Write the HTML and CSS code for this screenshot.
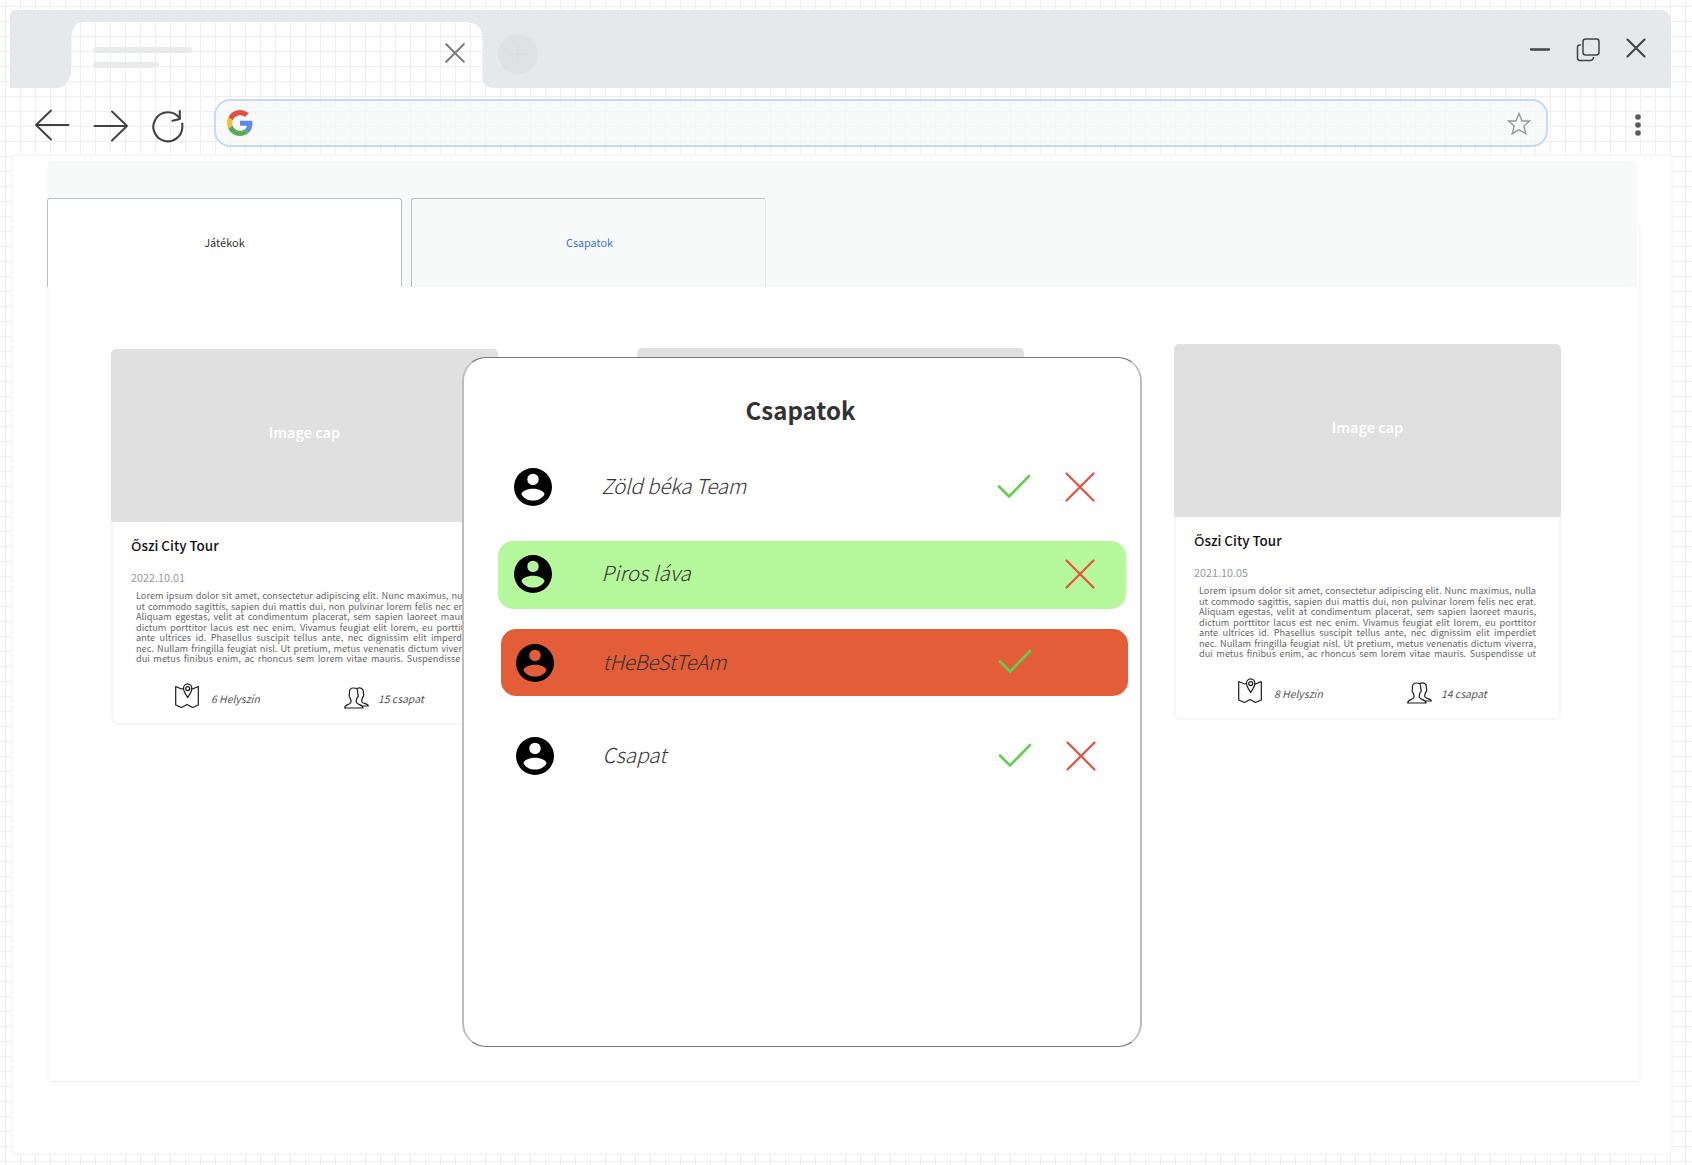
FILE: index.html
```html
<!DOCTYPE html>
<html lang="hu">
<head>
<meta charset="utf-8">
<title>Csapatok</title>
<link rel="stylesheet" href="styles.css">
</head>
<body>
<svg class="defs" width="0" height="0" aria-hidden="true">
  <symbol id="user" viewBox="0 0 38 38"><path fill-rule="evenodd" d="M19 0a19 19 0 1 0 0 38a19 19 0 0 0 0-38zM19 5.700a5.700 5.700 0 1 1 0 11.400a5.700 5.700 0 0 1 0-11.400zM19 20.700c6 0 11.500 2.600 11.500 5.700c-2 3.700-6.500 6.200-11.500 6.200s-9.500-2.500-11.500-6.200c0-3.100 5.500-5.700 11.500-5.700z"/></symbol>
  <symbol id="check" viewBox="0 0 34 24"><path d="M2 12.500L12 22.500L32 2" fill="none" stroke="#62d04e" stroke-width="2.600" stroke-linecap="round"/></symbol>
  <symbol id="cross" viewBox="0 0 30 30"><path d="M1.500 1.500L28.500 28.500M28.500 1.500L1.500 28.500" fill="none" stroke="#e3523f" stroke-width="2.200" stroke-linecap="round"/></symbol>
  <symbol id="map" viewBox="0 0 24 26"><g fill="none" stroke="#1b1b1b" stroke-width="1.200" stroke-linejoin="round"><path d="M8.500 5.500L6.500 6L.7 3.500V22L6.500 24.500L12 21.500L17.500 24.500L23.300 22V3.500L17.500 6L16 5.500"/><path d="M12.700 14.500C10.500 11 8.500 8.500 8.500 5.300a4.200 4.500 0 0 1 8.400 0C16.900 8.500 14.900 11 12.700 14.500z"/><circle cx="12.700" cy="5.600" r="2"/></g></symbol>
  <symbol id="people" viewBox="0 0 25 22"><g fill="none" stroke="#1b1b1b" stroke-width="1.200" stroke-linejoin="round"><path d="M.7 21C.7 17.500 5.500 18 6.800 15.500C7.600 13.500 7 12.800 6 10.500C5 10 5 7.500 5.500 6.500C5 2.500 6.500 1 9.600 1S14.200 2.500 13.700 6.500C14.300 8 14 10 13.200 10.500C12.200 12.800 11.700 13.500 12.500 15.500C13.800 18 19 17.500 19 21z"/><path d="M12.500 1.800C16.500-.2 20 1.500 19.300 6.300C20 8 19.600 9.500 18.700 10.200C17.800 12.500 17.200 13.300 18 15C19.200 17.200 24 16 24.300 19H18.500"/></g></symbol>
</svg>

<header class="titlebar">
  <svg class="titlebar-shape" viewBox="0 0 1661 78"><path fill="#e5e9ec" d="M0 78V6Q0 0 6 0H1649Q1661 0 1661 12V78H483Q472.500 78 472.500 66V30Q472.500 12 455 12H74Q61.500 12 61.500 28V54Q61.500 78 46 78z"/></svg>
  <div class="tab-lines"><i class="line-long"></i><i class="line-short"></i></div>
  <svg class="tab-close" viewBox="0 0 20 20"><path d="M1.200 1.200L18.800 18.800M18.800 1.200L1.200 18.800"/></svg>
  <svg class="new-tab" viewBox="0 0 40 40"><circle cx="20" cy="20" r="20"/><path d="M20 10V30M10 20H30"/></svg>
  <div class="window-buttons">
    <svg width="22" height="24" viewBox="0 0 22 24"><path d="M2 12.500H20" stroke-width="2.300"/></svg>
    <svg width="24" height="24" viewBox="0 0 24 24"><rect x="7" y="1" width="16" height="16" rx="2.500"/><path d="M4.500 7H3.500Q1.500 7 1.500 9V20Q1.500 22.500 4 22.500H14.500Q17 22.500 17.500 19.500"/></svg>
    <svg width="20" height="20" viewBox="0 0 20 20"><path d="M1.500 1.500L18.500 18.500M18.500 1.500L1.500 18.500" stroke-width="2.100"/></svg>
  </div>
</header>

<nav class="toolbar">
  <svg class="nav-icon" width="36" height="34" viewBox="0 0 36 34"><path d="M34.500 17H2M17 2.500L2 17L17 31.500"/></svg>
  <svg class="nav-icon forward" width="36" height="34" viewBox="0 0 36 34"><path d="M1.500 17H34M19 2.500L34 17L19 31.500"/></svg>
  <svg class="nav-icon reload" width="34" height="34" viewBox="0 0 34 34"><path d="M31.300 14.500V17A14.500 14.500 0 1 1 28.500 9.200M28.800 2V10L21.500 11.800"/></svg>
  <div class="address">
    <svg class="google" width="26" height="26" viewBox="0 0 48 48"><path fill="#e04f3c" d="M24 9.500c3.500 0 6.700 1.200 9.200 3.600l6.900-6.900C35.900 2.400 30.500 0 24 0C14.600 0 6.500 5.400 2.600 13.200l8 6.200C12.400 13.700 17.700 9.500 24 9.500z"/><path fill="#5c8af0" d="M47 24.600c0-1.600-.2-3.100-.4-4.600H24v9h12.900c-.6 3-2.300 5.500-4.800 7.200l7.700 6C44.400 38 47 32 47 24.600z"/><path fill="#f3bd3f" d="M10.500 28.600c-.5-1.500-.8-3-.8-4.600s.3-3.100.8-4.600l-8-6.200C.9 16.500 0 20.100 0 24s.9 7.500 2.600 10.800z"/><path fill="#56ad56" d="M24 48c6.500 0 11.900-2.100 15.900-5.800l-7.700-6c-2.200 1.500-4.900 2.300-8.200 2.300c-6.300 0-11.600-4.200-13.500-9.900l-8 6.200C6.500 42.600 14.600 48 24 48z"/></svg>
    <svg class="star" width="24" height="24" viewBox="0 0 24 24"><path d="M12 1.500L15 9H22.500L16.800 14L18.800 21.700L12 17.800L5.200 21.700L7.200 14L1.500 9H9z"/></svg>
  </div>
  <svg class="dots" width="8" height="24" viewBox="0 0 8 24"><circle cx="4" cy="4" r="2.800"/><circle cx="4" cy="12" r="2.800"/><circle cx="4" cy="20" r="2.800"/></svg>
</nav>

<main class="page">
  <div class="frame"></div>
  <div class="tabs">
    <div class="tab tab-active">Játékok</div>
    <div class="tab tab-link">Csapatok</div>
  </div>
  <section class="cards">
    <article class="card">
      <div class="image">Image cap</div>
      <h3>Őszi City Tour</h3>
      <time>2022.10.01</time>
      <p><span>Lorem ipsum dolor sit amet, consectetur adipiscing elit. Nunc maximus, nulla</span><span>ut commodo sagittis, sapien dui mattis dui, non pulvinar lorem felis nec erat.</span><span>Aliquam egestas, velit at condimentum placerat, sem sapien laoreet mauris,</span><span>dictum porttitor lacus est nec enim. Vivamus feugiat elit lorem, eu porttitor</span><span>ante ultrices id. Phasellus suscipit tellus ante, nec dignissim elit imperdiet</span><span>nec. Nullam fringilla feugiat nisl. Ut pretium, metus venenatis dictum viverra,</span><span>dui metus finibus enim, ac rhoncus sem lorem vitae mauris. Suspendisse ut</span></p>
      <div class="stats"><svg class="map"><use href="#map"/></svg><em class="places">6 Helyszín</em><svg class="people"><use href="#people"/></svg><em>15 csapat</em></div>
    </article>
    <article class="card card-middle">
      <div class="image"></div>
    </article>
    <article class="card card-last">
      <div class="image">Image cap</div>
      <h3>Őszi City Tour</h3>
      <time>2021.10.05</time>
      <p><span>Lorem ipsum dolor sit amet, consectetur adipiscing elit. Nunc maximus, nulla</span><span>ut commodo sagittis, sapien dui mattis dui, non pulvinar lorem felis nec erat.</span><span>Aliquam egestas, velit at condimentum placerat, sem sapien laoreet mauris,</span><span>dictum porttitor lacus est nec enim. Vivamus feugiat elit lorem, eu porttitor</span><span>ante ultrices id. Phasellus suscipit tellus ante, nec dignissim elit imperdiet</span><span>nec. Nullam fringilla feugiat nisl. Ut pretium, metus venenatis dictum viverra,</span><span>dui metus finibus enim, ac rhoncus sem lorem vitae mauris. Suspendisse ut</span></p>
      <div class="stats"><svg class="map"><use href="#map"/></svg><em class="places">8 Helyszín</em><svg class="people"><use href="#people"/></svg><em>14 csapat</em></div>
    </article>
  </section>
</main>

<div class="modal" role="dialog">
  <h2>Csapatok</h2>
  <ul>
    <li class="team"><svg class="user"><use href="#user"/></svg><em class="tight">Zöld béka Team</em><svg class="check"><use href="#check"/></svg><svg class="cross"><use href="#cross"/></svg></li>
    <li class="team accepted"><svg class="user"><use href="#user"/></svg><em class="loose">Piros láva</em><svg class="cross"><use href="#cross"/></svg></li>
    <li class="team rejected"><svg class="user"><use href="#user"/></svg><em class="tighter">tHeBeStTeAm</em><svg class="check"><use href="#check"/></svg></li>
    <li class="team shifted"><svg class="user"><use href="#user"/></svg><em class="loose">Csapat</em><svg class="check"><use href="#check"/></svg><svg class="cross"><use href="#cross"/></svg></li>
  </ul>
</div>
</body>
</html>
```

FILE: styles.css
```css
* { box-sizing: border-box; }
body {
  margin: 0;
  height: 1165px;
  padding-top: 10px;
  overflow: hidden;
  position: relative;
  font-family: "Noto Sans CJK SC", "Noto Sans", sans-serif;
  color: #333;
  background-color: #fff;
  background-image: linear-gradient(#eee 1px, transparent 1px), linear-gradient(90deg, #eee 1px, transparent 1px);
  background-size: 15px 15px;
  background-position: 5px 6px;
}
svg { display: block; flex: none; }
.defs { position: absolute; }
h2, h3, p, ul { margin: 0; padding: 0; }

.titlebar { position: relative; display: flex; width: 1661px; height: 78px; margin-left: 10px; }
.titlebar > * { position: relative; }
.titlebar .titlebar-shape { position: absolute; inset: 0; width: 1661px; height: 78px; }
.tab-lines { display: flex; flex-direction: column; gap: 9px; width: 99px; margin: 37px 0 0 83px; }
.tab-lines i { height: 6px; border-radius: 3px; background: #e9eaeb; }
.line-short { width: 66px; }
.tab-close { width: 20px; height: 20px; margin: 33px 0 0 253px; fill: none; stroke: #7b7d7e; stroke-width: 2.100; stroke-linecap: round; }
.new-tab { width: 40px; height: 40px; margin: 24px 0 0 33px; fill: #e0e1e3; stroke: #d9dbdc; }
.new-tab circle { stroke: none; }
.window-buttons { display: flex; margin: 27px 25px 0 auto; fill: none; stroke: #434445; stroke-width: 1.500; stroke-linecap: round; }
.window-buttons svg:nth-child(2) { margin: 1px 26px 0 25px; }
.window-buttons svg:nth-child(3) { margin-top: 1px; }

.toolbar { display: flex; align-items: flex-start; height: 66px; padding: 11px 0 0 34px; }
.nav-icon { margin-top: 9px; fill: none; stroke: #414142; stroke-width: 1.900; stroke-linecap: round; stroke-linejoin: round; }
.forward { margin: 10px 0 0 23px; }
.reload { margin: 10px 0 0 22px; stroke-width: 2.100; }
.address {
  display: flex; align-items: flex-start; justify-content: space-between;
  width: 1334px; height: 48px; margin-left: 29px; padding: 10px 15px 0 11px;
  border: 2px solid #c6d8fc; border-radius: 16px; background: rgba(245, 247, 247, .75);
}
.google { margin-top: -1px; }
.star { margin-top: 1px; fill: none; stroke: #999; stroke-width: 1.400; }
.dots { margin: 14px 0 0 86px; fill: #58595b; }

.page {
  position: relative; width: 1662px; height: 1001px; margin-left: 11px; padding: 5px 0 0 34px;
  border: 2px solid #f7f7f7; border-radius: 6px; background: #fff;
}
.frame {
  position: absolute; left: 34px; top: 68px; width: 1594px; height: 858px;
  border: 2px solid #f7f7f7; border-bottom: 1px solid #efefef; border-radius: 5px;
}
.tabs { position: relative; display: flex; align-items: flex-end; gap: 9px; width: 1590px; height: 126px; background: #f8faf9; border-radius: 4px 4px 0 0; }
.tab {
  width: 355px; height: 89px; padding-bottom: 2px;
  display: flex; align-items: center; justify-content: center;
  border: 1px solid #bfc1c0; border-bottom: 0; border-radius: 3px 3px 0 0;
  font-size: 11px; line-height: 16px;
}
.tab-active { background: #fff; }
.tab-link { padding-left: 2px; color: #3d6ef0; border-right-color: #e9ebea; font-size: 10.800px; }

.cards { position: relative; display: flex; align-items: flex-start; margin: 62px 0 0 64px; }
.card { width: 387px; height: 376px; border: 2px solid #f4f7f8; border-radius: 6px; font-weight: 400; }
.card-middle { margin: -1px 0 0 139px; }
.card-last { margin: -5px 0 0 150px; }
.image {
  width: 387px; height: 173px; margin: -2px 0 0 -2px; padding-bottom: 8px;
  display: flex; align-items: center; justify-content: center;
  background: #e0e0e0; border-radius: 5px 5px 2px 2px; color: #fff; font-size: 14.600px; font-weight: 500;
}
.card h3 { margin: 13px 0 0 18px; color: #111; font-size: 13.400px; line-height: 20px; font-weight: 500; }
.card time { display: block; margin: 14px 0 0 18px; font-size: 10.800px; line-height: 16px; color: #999; }
.card p { width: 337px; margin: 5px 0 0 23px; font-size: 9.200px; line-height: 10.500px; color: #666; }
.card p span { display: block; text-align: justify; text-align-last: justify; white-space: nowrap; }
.stats { display: flex; align-items: flex-end; margin: 19px 0 0 62px; font-size: 10.400px; color: #555; line-height: 16px; }
.stats em { padding-bottom: 2px; }
.map { width: 24px; height: 26px; }
.people { width: 25px; height: 22px; margin-right: 9px; }
.places { width: 133px; margin-left: 12px; }

.modal {
  position: absolute; left: 462px; top: 357px; width: 680px; height: 690px;
  border: solid #bdbdbd; border-width: 1px 2px; border-top-color: #777; border-bottom-color: #777;
  border-radius: 24px; background: #fff; padding-top: 33px;
}
.modal h2 { padding-right: 3px; text-align: center; font-size: 24px; line-height: 38px; font-weight: 700; color: #333; }
.modal ul { list-style: none; padding-left: 34px; }
.team { display: flex; align-items: center; width: 628px; height: 68px; padding-left: 16px; border-radius: 15px; margin-top: 24px; }
.team em { width: 395px; margin-left: 49.500px; font-size: 20.500px; line-height: 30px; font-weight: 300; white-space: nowrap; padding-bottom: 4px; }
.team .tight { letter-spacing: -.15px; }
.team .tighter { letter-spacing: -.3px; }
.team .loose { letter-spacing: .1px; }
.user { width: 38px; height: 38px; }
.check { width: 34px; height: 24px; margin-top: -3px; }
.cross { width: 30px; height: 30px; margin-left: 34px; }
.accepted { height: 68px; padding-bottom: 2px; background: #b6f89c; margin-top: 20px; }
.accepted .cross { margin-left: 68px; }
.rejected { height: 67px; background: #e35e38; margin: 20px 0 0 3px; width: 627px; padding-left: 14.500px; }
.rejected em, .shifted em { margin-left: 49px; }
.shifted { margin: 26px 0 0 2px; padding-left: 15.500px; }
```
